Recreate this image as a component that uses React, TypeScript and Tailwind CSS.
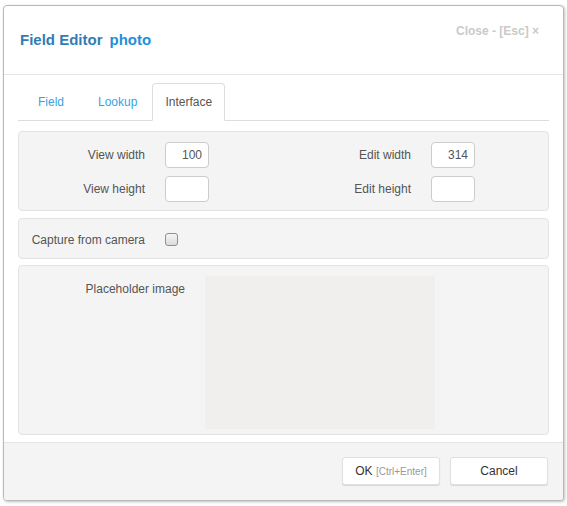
import React, { useState } from 'react'

const font = { fontFamily: '"Liberation Sans", Arial, sans-serif' }

const tabs = ['Field', 'Lookup', 'Interface']

const SizeInput: React.FC<{ value?: string }> = ({ value = '' }) => (
  <input
    defaultValue={value}
    className="w-[44px] h-[26px] rounded-[4px] border border-[#cccccc] bg-white px-[6px] text-right text-[12px] text-[#555] outline-none"
  />
)

const Row: React.FC<{ label: string; value?: string }> = ({ label, value }) => (
  <div className="flex items-center">
    <label className="w-[126px] text-right text-[12px] text-[#555]">{label}</label>
    <div className="ml-[20px]">
      <SizeInput value={value} />
    </div>
  </div>
)

export default function App() {
  const [active, setActive] = useState(2)

  return (
    <div style={font} className="w-[567px] h-[506px] bg-white pt-[5px] pl-[3px]">
      <div className="w-[561px] h-[496px] flex flex-col rounded-[4px] border border-[#b8b8b8] bg-white shadow-[1px_1px_3px_rgba(0,0,0,0.25)] overflow-hidden">
        {/* Header */}
        <div className="h-[69px] shrink-0 flex justify-between items-start border-b border-[#e5e5e5] px-[16px]">
          <h4 className="pt-[25px] text-[15px] font-bold leading-[18px]">
            <span className="text-[#2f7db6]">Field Editor</span>
            <span className="ml-[7px] text-[#1f8fd8]">photo</span>
          </h4>
          <button className="mt-[18px] mr-[8px] text-[12px] font-bold leading-[14px] text-[#cacaca]">
            Close - [Esc] ×
          </button>
        </div>

        {/* Body */}
        <div className="flex-1 px-[14px] pt-[8px]">
          <div className="flex h-[38px] border-b border-[#dddddd]">
            {tabs.map((tab, i) => {
              const margin = i === 0 ? 'ml-[7px]' : i === 1 ? 'ml-[8px]' : 'ml-[2px]'
              return (
                <button
                  key={tab}
                  onClick={() => setActive(i)}
                  className={`${margin} -mb-px h-[38px] px-[12px] text-[12px] rounded-t-[4px] border ${
                    i === active
                      ? 'bg-white border-[#dddddd] border-b-white text-[#555]'
                      : 'border-transparent text-[#3aa2e2]'
                  }`}
                >
                  {tab}
                </button>
              )
            })}
          </div>

          {/* Size panel */}
          <div className="mt-[10px] h-[80px] rounded-[4px] border border-[#e3e3e3] bg-[#f4f4f4] pt-[10px] flex flex-col gap-[8px]">
            <div className="flex">
              <div className="w-[266px]">
                <Row label="View width" value="100" />
              </div>
              <Row label="Edit width" value="314" />
            </div>
            <div className="flex">
              <div className="w-[266px]">
                <Row label="View height" />
              </div>
              <Row label="Edit height" />
            </div>
          </div>

          {/* Camera panel */}
          <div className="mt-[7px] h-[41px] rounded-[4px] border border-[#e3e3e3] bg-[#f4f4f4] pt-[2px] flex items-center">
            <label className="w-[126px] text-right text-[12px] text-[#555]">Capture from camera</label>
            <span className="ml-[20px] w-[13px] h-[13px] rounded-[3px] border border-[#8f8f8f] bg-gradient-to-b from-[#f4f4f4] to-[#dcdcdc]" />
          </div>

          {/* Placeholder panel */}
          <div className="mt-[6px] h-[170px] rounded-[4px] border border-[#e3e3e3] bg-[#f4f4f4] pt-[10px] flex">
            <label className="w-[166px] pt-[4px] text-right text-[12px] text-[#555]">Placeholder image</label>
            <div className="ml-[20px] w-[230px] h-[153px] bg-[#f0efee]" />
          </div>
        </div>

        {/* Footer */}
        <div className="h-[58px] shrink-0 border-t border-[#e5e5e5] bg-[#f4f4f4] flex justify-end items-start gap-[10px] pt-[14px] pr-[15px]">
          <button className="w-[98px] h-[28px] rounded-[3px] border border-[#e0e0e0] bg-white text-[12px] text-[#333] shadow-[0_1px_1px_rgba(0,0,0,0.12)]">
            OK <span className="text-[10px] text-[#999]">[Ctrl+Enter]</span>
          </button>
          <button className="w-[98px] h-[28px] rounded-[3px] border border-[#e0e0e0] bg-white text-[12px] text-[#333] shadow-[0_1px_1px_rgba(0,0,0,0.12)]">
            Cancel
          </button>
        </div>
      </div>
    </div>
  )
}
